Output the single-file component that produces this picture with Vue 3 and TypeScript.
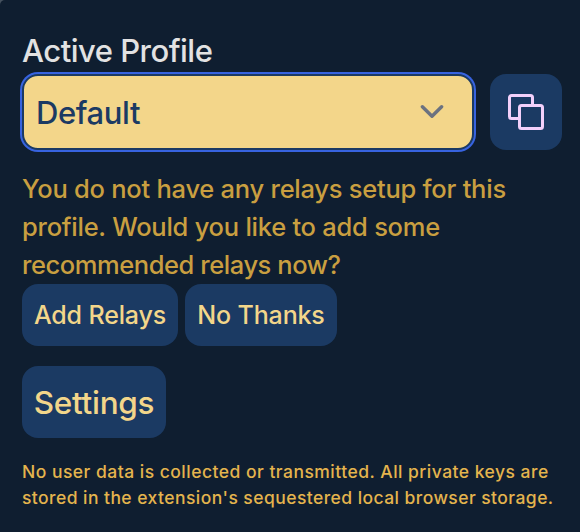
<script setup lang="ts">
import { ref } from 'vue'

const profile = ref<string>('Default')
const relayPrompt: string[] = [
  'You do not have any relays setup for this',
  'profile. Would you like to add some',
  'recommended relays now?',
]
const privacyNote: string[] = [
  'No user data is collected or transmitted. All private keys are',
  "stored in the extension's sequestered local browser storage.",
]
</script>

<template>
  <main class="popup">
    <div class="label">Active Profile</div>
    <div class="profile-row">
      <div class="select" role="combobox" tabindex="0">
        <span class="value">{{ profile }}</span>
        <svg class="chevron" width="24" height="16" viewBox="0 0 24 16">
          <path d="M2.4 2.7 12 12.3 21.6 2.7" />
        </svg>
      </div>
      <button class="copy" type="button" aria-label="Copy">
        <svg width="36" height="36" viewBox="0 0 36 36">
          <path d="M11.5 24.5H3.5a2 2 0 0 1-2-2V3.5a2 2 0 0 1 2-2H22.5a2 2 0 0 1 2 2v8" />
          <rect x="11.5" y="11.5" width="23" height="23" rx="2" />
        </svg>
      </button>
    </div>
    <p class="prompt">
      <span v-for="line in relayPrompt" :key="line" class="line">{{ line }}</span>
    </p>
    <div class="actions">
      <button class="btn add" type="button">Add Relays</button>
      <button class="btn decline" type="button">No Thanks</button>
    </div>
    <button class="btn settings" type="button">Settings</button>
    <p class="note">
      <span v-for="line in privacyNote" :key="line" class="line">{{ line }}</span>
    </p>
  </main>
</template>

<style>
body {
  background: #46525f;
}
</style>

<style scoped>
.popup {
  box-sizing: border-box;
  height: 532px;
  padding: 27px 18px 0 22px;
  overflow: hidden;
  border-top-left-radius: 5px;
  background: #0f1e30;
  font-family: Inter, 'Liberation Sans', sans-serif;
  font-weight: 450;
}
.label {
  height: 47px;
  line-height: 48px;
  font-size: 31px;
  letter-spacing: -0.5px;
  color: #e2e2e2;
}
.profile-row {
  display: flex;
  gap: 16px;
  height: 76px;
}
.select {
  box-sizing: border-box;
  display: flex;
  flex: 1;
  align-items: center;
  justify-content: space-between;
  padding: 0 28px 0 12px;
  border: 2px solid #1b3a63;
  border-radius: 16px;
  background: #f3d68a;
  box-shadow: 0 0 0 2px #3763e0;
  outline: none;
  color: #1b3a63;
  font-size: 31px;
  letter-spacing: -0.4px;
}
.chevron path {
  fill: none;
  stroke: #6b7280;
  stroke-width: 3.4;
  stroke-linecap: round;
  stroke-linejoin: round;
}
button {
  border: 0;
  border-radius: 16px;
  background: #1b3a63;
  font-family: inherit;
}
.copy {
  display: flex;
  align-items: center;
  justify-content: center;
  width: 72px;
  padding: 0;
}
.copy svg {
  fill: none;
  stroke: #f3d0fb;
  stroke-width: 3;
}
.prompt {
  margin: 20px 0 0;
  font-size: 25.5px;
  line-height: 38px;
  letter-spacing: -0.25px;
  color: #c99f40;
}
.prompt .line:last-child {
  letter-spacing: -0.43px;
}
.line {
  display: block;
  white-space: nowrap;
}
.actions {
  display: flex;
  gap: 7px;
}
.btn {
  display: block;
  padding: 0;
  text-align: center;
  white-space: nowrap;
  font-weight: 500;
  color: #f3d68a;
}
.actions .btn {
  height: 62px;
  font-size: 25px;
  letter-spacing: -0.15px;
}
.add {
  width: 156px;
}
.decline {
  width: 152px;
}
.settings {
  width: 144px;
  height: 72px;
  margin-top: 20px;
  font-size: 31.5px;
  letter-spacing: -0.3px;
}
.note {
  margin: 21px 0 0;
  font-size: 17.5px;
  line-height: 26px;
  letter-spacing: 0.48px;
  color: #e4b44d;
}
.note .line:last-child {
  letter-spacing: 0.44px;
}
</style>
